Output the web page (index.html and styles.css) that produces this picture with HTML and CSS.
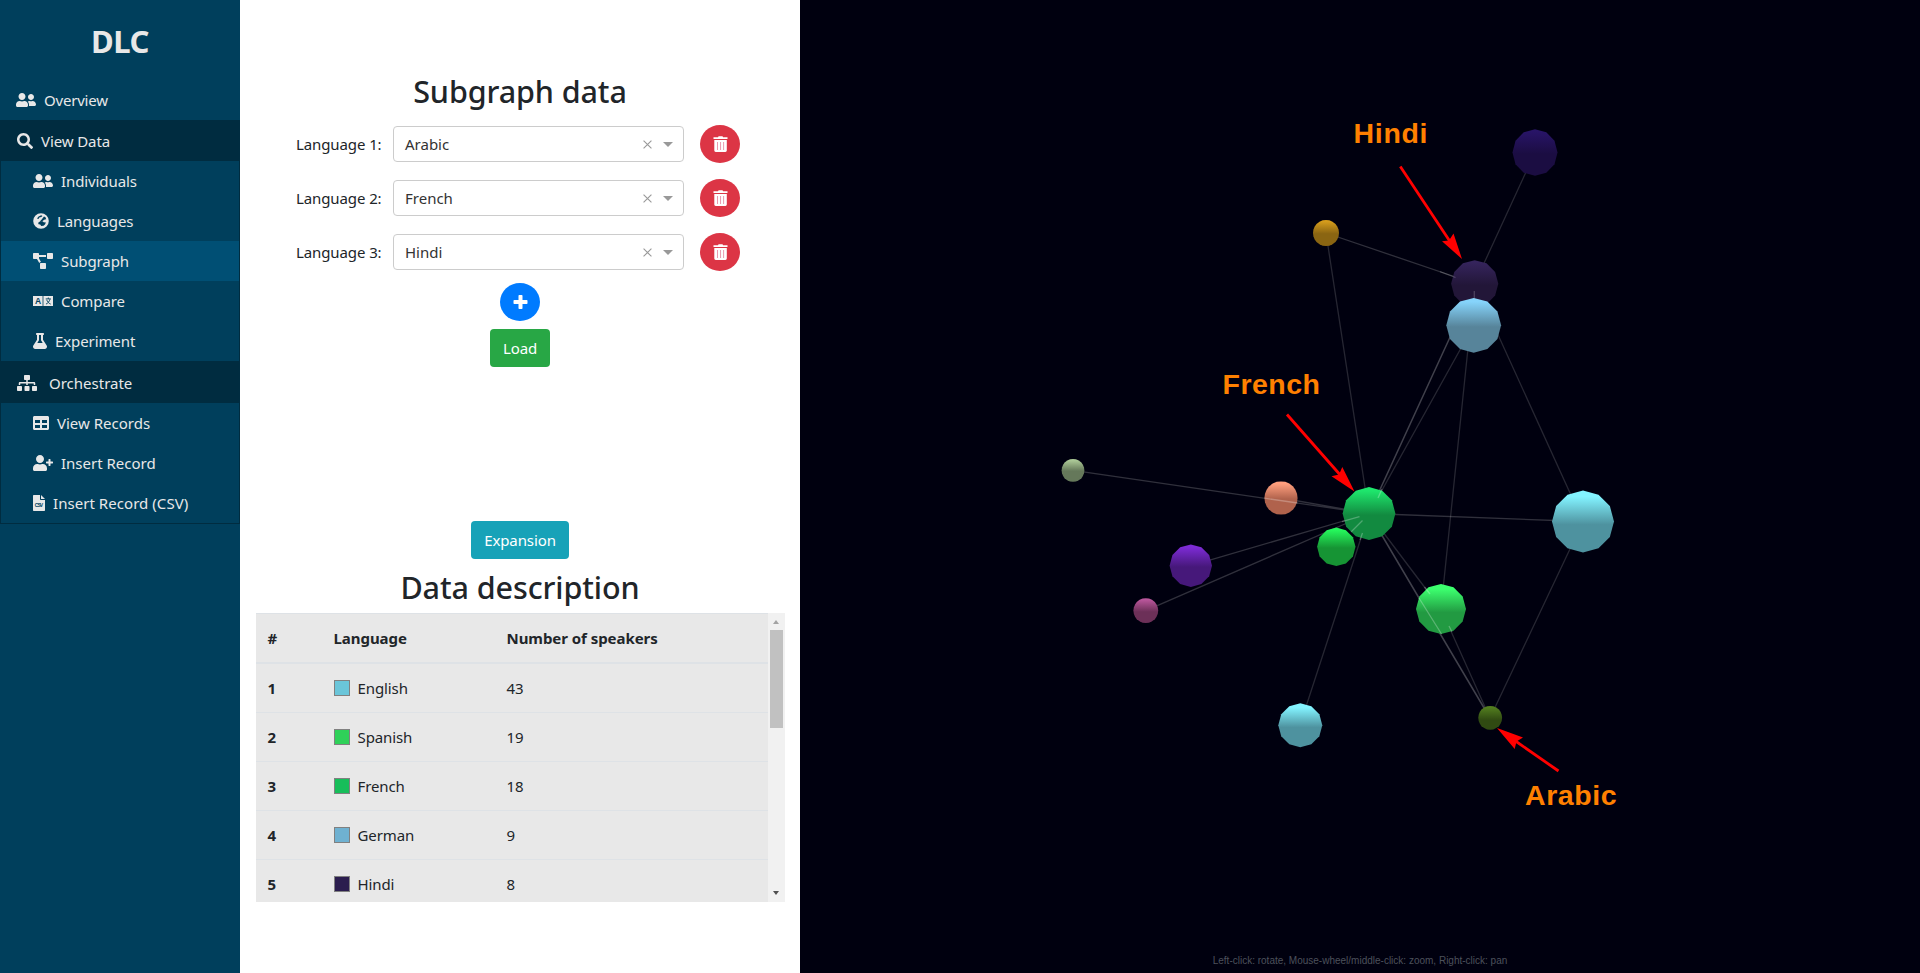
FILE: index.html
```html
<!DOCTYPE html>
<html lang="en">
<head>
<meta charset="utf-8">
<title>DLC - Subgraph</title>
<link rel="stylesheet" href="styles.css">
</head>
<body>
<svg class="defs" width="0" height="0" aria-hidden="true">
  <symbol id="i-users" viewBox="0 0 640 512"><path d="M192 256c61.9 0 112-50.1 112-112S253.9 32 192 32 80 82.1 80 144s50.1 112 112 112zm76.800 32h-8.300c-20.800 10-43.900 16-68.500 16s-47.600-6-68.500-16h-8.300C51.600 288 0 339.600 0 403.200V432c0 26.500 21.500 48 48 48h288c26.500 0 48-21.500 48-48v-28.800c0-63.600-51.600-115.200-115.200-115.200zM480 256c53 0 96-43 96-96s-43-96-96-96-96 43-96 96 43 96 96 96zm48 32h-3.800c-13.900 4.800-28.600 8-44.200 8s-30.300-3.200-44.200-8H432c-20.400 0-39.200 5.900-55.700 15.400 24.400 26.300 39.700 61.200 39.700 99.800v38.400c0 2.200-.5 4.300-.6 6.400H592c26.500 0 48-21.500 48-48 0-61.900-50.100-112-112-112z"/></symbol>
  <symbol id="i-search" viewBox="0 0 512 512"><path d="M505 442.700L405.300 343c-4.500-4.500-10.600-7-17-7H372c27.600-35.300 44-79.700 44-128C416 93.100 322.900 0 208 0S0 93.100 0 208s93.100 208 208 208c48.300 0 92.700-16.400 128-44v16.300c0 6.400 2.500 12.500 7 17l99.700 99.700c9.400 9.400 24.600 9.400 33.900 0l28.300-28.300c9.400-9.400 9.400-24.600.1-34zM208 336c-70.700 0-128-57.200-128-128 0-70.700 57.200-128 128-128 70.700 0 128 57.200 128 128 0 70.700-57.200 128-128 128z"/></symbol>
  <symbol id="i-globe" viewBox="0 0 16 16"><path fill-rule="evenodd" d="M8 .2a7.800 7.800 0 1 0 0 15.600A7.800 7.800 0 0 0 8 .2zM4 5.600 5.600 3.400 8.200 2.300 9.500 2.900 8.300 4.100 6.300 4.500 5.500 5.900zM9.800 4.900l1.200-1.500 1.500.9.700 2-1.400.3-2.400 1.300-2.200.2 1.500-1.700zM5.200 9.800l2.400-1.700 2 .2 1 1 2.300.3-.9 1.800-1.500 1.300-2.300.2-1-1.300-1.700-.3z"/></symbol>
  <symbol id="i-diagram" viewBox="0 0 640 512"><path d="M384 320H256c-17.670 0-32 14.330-32 32v128c0 17.670 14.330 32 32 32h128c17.670 0 32-14.330 32-32V352c0-17.670-14.330-32-32-32zM192 32c0-17.670-14.330-32-32-32H32C14.330 0 0 14.330 0 32v128c0 17.670 14.330 32 32 32h95.720l73.160 128.040C211.980 300.980 232.400 288 256 288h.28L192 175.510V128h224V64H192V32zM608 0H480c-17.670 0-32 14.330-32 32v128c0 17.670 14.330 32 32 32h128c17.670 0 32-14.330 32-32V32c0-17.670-14.330-32-32-32z"/></symbol>
  <symbol id="i-flask" viewBox="0 0 448 512"><path d="M437.200 403.500L320 215V64h8c13.300 0 24-10.700 24-24V24c0-13.300-10.700-24-24-24H120c-13.300 0-24 10.700-24 24v16c0 13.300 10.700 24 24 24h8v151L10.800 403.500C-18.500 450.600 15.300 512 70.900 512h306.200c55.700 0 89.400-61.500 60.100-108.500zM137.900 320l48.200-77.600c3.700-5.200 5.800-11.600 5.800-18.400V64h64v160c0 6.900 2.200 13.200 5.800 18.400l48.200 77.600h-172z"/></symbol>
  <symbol id="i-sitemap" viewBox="0 0 640 512"><path d="M128 352H32c-17.670 0-32 14.330-32 32v96c0 17.670 14.330 32 32 32h96c17.670 0 32-14.330 32-32v-96c0-17.670-14.330-32-32-32zm-24-80h192v48h48v-48h192v48h48v-57.590c0-21.170-17.230-38.410-38.410-38.410H344v-64h40c17.670 0 32-14.330 32-32V32c0-17.670-14.330-32-32-32H256c-17.670 0-32 14.330-32 32v96c0 17.670 14.330 32 32 32h40v64H94.410C73.230 224 56 241.230 56 262.410V320h48v-48zm264 80h-96c-17.670 0-32 14.330-32 32v96c0 17.670 14.330 32 32 32h96c17.670 0 32-14.330 32-32v-96c0-17.670-14.330-32-32-32zm240 0h-96c-17.670 0-32 14.330-32 32v96c0 17.670 14.330 32 32 32h96c17.670 0 32-14.330 32-32v-96c0-17.670-14.330-32-32-32z"/></symbol>
  <symbol id="i-table" viewBox="0 0 512 512"><path d="M464 32H48C21.490 32 0 53.490 0 80v352c0 26.510 21.490 48 48 48h416c26.510 0 48-21.490 48-48V80c0-26.510-21.490-48-48-48zM224 416H64v-96h160v96zm0-160H64v-96h160v96zm224 160H288v-96h160v96zm0-160H288v-96h160v96z"/></symbol>
  <symbol id="i-userplus" viewBox="0 0 640 512"><path d="M624 208h-64v-64c0-8.800-7.200-16-16-16h-32c-8.800 0-16 7.200-16 16v64h-64c-8.800 0-16 7.200-16 16v32c0 8.800 7.200 16 16 16h64v64c0 8.800 7.200 16 16 16h32c8.800 0 16-7.200 16-16v-64h64c8.800 0 16-7.200 16-16v-32c0-8.800-7.200-16-16-16zm-400 48c70.700 0 128-57.300 128-128S294.700 0 224 0 96 57.300 96 128s57.300 128 128 128zm89.600 32h-16.700c-22.200 10.200-46.900 16-72.900 16s-50.600-5.800-72.900-16h-16.700C60.200 288 0 348.200 0 422.400V464c0 26.500 21.500 48 48 48h352c26.500 0 48-21.500 48-48v-41.600c0-74.200-60.200-134.400-134.400-134.400z"/></symbol>
  <symbol id="i-plus" viewBox="0 0 15 16"><path d="M6.300 1h2.400q.8 0 .8.800V6h4.200q.8 0 .8.800v2.400q0 .8-.8.800H9.500v4.200q0 .8-.8.800H6.300q-.8 0-.8-.8V10H1.300q-.8 0-.8-.8V6.800q0-.8.8-.8h4.200V1.800q0-.8.800-.8z"/></symbol>
  <symbol id="i-trash" viewBox="0 0 15 16"><path d="M.5 1.200H5L5.600.200h3.900l.600 1h4.400v1.900H.500z"/><path d="M1.300 4.100h12.500v10.500q0 1.400-1.400 1.400H2.700q-1.400 0-1.400-1.400z"/><path class="slots" d="M4.500 6v8M7.550 6v8M10.600 6v8"/></symbol>
</svg>

<nav class="sidebar">
  <h1 class="brand">DLC</h1>
  <a class="item overview"><svg class="ic w20"><use href="#i-users"/></svg>Overview</a>
  <a class="item group"><svg class="ic w16"><use href="#i-search"/></svg>View Data</a>
  <div class="submenu">
    <a class="item"><svg class="ic w20"><use href="#i-users"/></svg>Individuals</a>
    <a class="item"><svg class="ic w16"><use href="#i-globe"/></svg>Languages</a>
    <a class="item active"><svg class="ic w20"><use href="#i-diagram"/></svg>Subgraph</a>
    <a class="item"><svg class="ic w20" viewBox="0 0 20 16"><path d="M0 3h9.600v10H0zM10.400 3H20v10h-9.600z"/><path class="ink" d="M12.700 5.900h5.200M15.300 4.500v1.400M17 6.200c-.6 2.200-2 3.900-4 4.900M13.700 6.800c.7 2 2 3.500 4 4.300"/><text class="glyph-a" x="2.100" y="11.200">A</text></svg>Compare</a>
    <a class="item"><svg class="ic w14"><use href="#i-flask"/></svg>Experiment</a>
  </div>
  <a class="item group orchestrate"><svg class="ic w20"><use href="#i-sitemap"/></svg>Orchestrate</a>
  <div class="submenu last">
    <a class="item"><svg class="ic w16"><use href="#i-table"/></svg>View Records</a>
    <a class="item"><svg class="ic w20"><use href="#i-userplus"/></svg>Insert Record</a>
    <a class="item csv"><svg class="ic w12" viewBox="0 0 12 16"><path d="M.7 0H7v4.300c0 .4.300.7.7.7H12v10.300c0 .4-.3.700-.7.700H.7c-.4 0-.7-.3-.7-.7V.7C0 .3.300 0 .7 0zM8 0l4 4H8z"/><text class="glyph-csv" x="1.800" y="11.600" textLength="8.400">CSV</text></svg>Insert Record (CSV)</a>
  </div>
</nav>

<main class="panel">
  <h2 class="title subgraph-title">Subgraph data</h2>
  <div class="pickers">
    <div class="picker"><label>Language 1:</label><div class="select"><span class="value">Arabic</span><svg class="clear" viewBox="0 0 8 8"><path d="M.5.5l7 7M7.500.5l-7 7"/></svg><i class="caret"></i></div><button class="round danger"><svg class="trash"><use href="#i-trash"/></svg></button></div>
    <div class="picker"><label>Language 2:</label><div class="select"><span class="value">French</span><svg class="clear" viewBox="0 0 8 8"><path d="M.5.5l7 7M7.500.5l-7 7"/></svg><i class="caret"></i></div><button class="round danger"><svg class="trash"><use href="#i-trash"/></svg></button></div>
    <div class="picker"><label>Language 3:</label><div class="select"><span class="value">Hindi</span><svg class="clear" viewBox="0 0 8 8"><path d="M.5.5l7 7M7.500.5l-7 7"/></svg><i class="caret"></i></div><button class="round danger"><svg class="trash"><use href="#i-trash"/></svg></button></div>
  </div>
  <button class="round add"><svg class="plus"><use href="#i-plus"/></svg></button>
  <button class="btn load">Load</button>
  <button class="btn expansion">Expansion</button>
  <h2 class="title description-title">Data description</h2>
  <div class="table-box">
    <div class="table">
      <div class="row head"><span>#</span><span>Language</span><span>Number of speakers</span></div>
      <div class="row"><b>1</b><span class="lang"><i class="swatch english"></i>English</span><span>43</span></div>
      <div class="row"><b>2</b><span class="lang"><i class="swatch spanish"></i>Spanish</span><span>19</span></div>
      <div class="row"><b>3</b><span class="lang"><i class="swatch french"></i>French</span><span>18</span></div>
      <div class="row"><b>4</b><span class="lang"><i class="swatch german"></i>German</span><span>9</span></div>
      <div class="row"><b>5</b><span class="lang"><i class="swatch hindi"></i>Hindi</span><span>8</span></div>
    </div>
    <div class="scrollbar"><i class="arrow up"></i><i class="thumb"></i><i class="arrow down"></i></div>
  </div>
</main>

<section class="graph">
<svg class="scene" viewBox="800 0 1120 973">
  <defs>
    <polygon id="ball" points="0,-1 .5,-.866 .866,-.5 1,0 .866,.5 .5,.866 0,1 -.5,.866 -.866,.5 -1,0 -.866,-.5 -.5,-.866"/>
    <polygon id="ball-fine" points="0,-1 .26,-.975 .5,-.866 .73,-.7 .866,-.5 .965,-.26 1,0 .965,.26 .866,.5 .73,.7 .5,.866 .26,.975 0,1 -.26,.975 -.5,.866 -.73,.7 -.866,.5 -.965,.26 -1,0 -.965,-.26 -.866,-.5 -.73,-.7 -.5,-.866 -.26,-.975"/>
    <linearGradient id="g1" x2="0" y2="1"><stop offset=".05" stop-color="#281467"/><stop offset=".53" stop-color="#1b0d42"/></linearGradient>
    <linearGradient id="g2" x2="0" y2="1"><stop offset=".05" stop-color="#d69d1c"/><stop offset=".53" stop-color="#8a6512"/></linearGradient>
    <linearGradient id="g3" x2="0" y2="1"><stop offset=".05" stop-color="#35245c"/><stop offset=".53" stop-color="#221638"/></linearGradient>
    <linearGradient id="g4" x2="0" y2="1"><stop offset=".07" stop-color="#86d4fb"/><stop offset=".53" stop-color="#57849a"/></linearGradient>
    <linearGradient id="g5" x2="0" y2="1"><stop offset=".07" stop-color="#1ee66c"/><stop offset=".53" stop-color="#128a40"/></linearGradient>
    <linearGradient id="g6" x2="0" y2="1"><stop offset=".07" stop-color="#25f75b"/><stop offset=".53" stop-color="#169434"/></linearGradient>
    <linearGradient id="g7" x2="0" y2="1"><stop offset=".07" stop-color="#ff9f7e"/><stop offset=".53" stop-color="#b0624c"/></linearGradient>
    <linearGradient id="g8" x2="0" y2="1"><stop offset=".1" stop-color="#83f3ff"/><stop offset=".55" stop-color="#4e929f"/></linearGradient>
    <linearGradient id="g9" x2="0" y2="1"><stop offset=".1" stop-color="#3cff6e"/><stop offset=".57" stop-color="#229a42"/></linearGradient>
    <linearGradient id="g10" x2="0" y2="1"><stop offset=".07" stop-color="#aac795"/><stop offset=".53" stop-color="#65785a"/></linearGradient>
    <linearGradient id="g11" x2="0" y2="1"><stop offset=".07" stop-color="#7c2bd4"/><stop offset=".53" stop-color="#46187a"/></linearGradient>
    <linearGradient id="g12" x2="0" y2="1"><stop offset=".07" stop-color="#b8559a"/><stop offset=".55" stop-color="#6c3058"/></linearGradient>
    <linearGradient id="g13" x2="0" y2="1"><stop offset=".07" stop-color="#527d1f"/><stop offset=".6" stop-color="#304a12"/></linearGradient>
  </defs>
  <path class="edge" d="M1535 152.500L1474.700 283.500M1326 233L1369 513.500M1473.700 325.300L1369 513.500M1474.700 283.500L1441 609M1474.700 283.500L1583 521.500M1583 521.500L1490 718M1369 513.500L1441 609M1441 609L1490 718M1369 513.500L1300 725"/>
  <path class="edge mid" d="M1326 233L1474.700 283.500M1369 513.500L1583 521.500M1369 513.500L1281 498M1369 513.500L1073 470.300M1369 513.500L1191 565.700M1369 513.500L1145.800 610.600"/>
  <path class="edge strong" d="M1474.700 283.500L1369 513.500M1369 513.500L1490 718"/>
  <g>
    <use href="#ball" fill="url(#g1)" transform="translate(1535 152.500) scale(22.500 23.300)"/>
    <use href="#ball-fine" fill="url(#g2)" transform="translate(1326 233) scale(13)"/>
    <use href="#ball" fill="url(#g3)" transform="translate(1474.700 283.800) scale(23.600)"/>
    <path class="edge mid" d="M1440 271.700L1455.500 277.500M1474.300 291v8"/>
    <use href="#ball" fill="url(#g4)" transform="translate(1473.700 325.300) scale(27.400)"/>
    <use href="#ball" fill="url(#g5)" transform="translate(1369 513.500) scale(26.400)"/>
    <path class="edge over" d="M1382 489L1378 498M1342 521.500L1359.500 516.500M1351 532L1362.500 520.500M1362.500 533L1360 540"/>
    <use href="#ball" fill="url(#g6)" transform="translate(1336.300 546.800) scale(19.200)"/>
    <use href="#ball-fine" fill="url(#g7)" transform="translate(1281 498) scale(16.600)"/>
    <path class="edge over" d="M1264.500 498.200L1297.500 503"/>
    <use href="#ball" fill="url(#g8)" transform="translate(1583 521.500) scale(31)"/>
    <use href="#ball" fill="url(#g9)" transform="translate(1441 609) scale(25)"/>
    <path class="edge over" d="M1419 598L1441.500 634M1424.500 587L1430 594M1449 626l3 6"/>
    <use href="#ball-fine" fill="url(#g10)" transform="translate(1073 470.400) scale(11.400)"/>
    <use href="#ball" fill="url(#g11)" transform="translate(1190.800 565.700) scale(21.200)"/>
    <use href="#ball-fine" fill="url(#g12)" transform="translate(1145.800 610.600) scale(12.400)"/>
    <use href="#ball-fine" fill="url(#g13)" transform="translate(1490.200 717.800) scale(11.900)"/>
    <use href="#ball" fill="url(#g8)" transform="translate(1300.300 725.200) scale(22)"/>
  </g>
  <g class="pointer">
    <path d="M1400.300 166.500L1451 243M1287 414.500L1342 477M1558.500 771L1514 740"/>
    <polygon points="1462,259 1442,241.300 1449,240.500 1453.500,233.500"/>
    <polygon points="1354.500,491.500 1331.500,476.300 1339,474.500 1342.300,467"/>
    <polygon points="1497,728 1523,737.500 1516.500,741.500 1514.700,749"/>
  </g>
  <g class="tag">
    <text x="1353.500" y="143" textLength="74">Hindi</text>
    <text x="1222.500" y="394" textLength="97.500">French</text>
    <text x="1525" y="805" textLength="91.500">Arabic</text>
  </g>
</svg>
<p class="hint">Left-click: rotate, Mouse-wheel/middle-click: zoom, Right-click: pan</p>
</section>
</body>
</html>
```
FILE: styles.css
```css
* { box-sizing: border-box; }
body {
  margin: 0;
  height: 973px;
  display: grid;
  grid-template-columns: 240px 560px 1120px;
  overflow: hidden;
  background: #fff;
  color: #212529;
  font: 15px/24px "Noto Sans", "Open Sans", sans-serif;
  letter-spacing: -0.1px;
}
.defs { position: absolute; }
h1, h2, p { margin: 0; }
button { border: 0; padding: 0; font: inherit; letter-spacing: inherit; color: #fff; }

/* Sidebar */
.sidebar { background: #003f5c; color: #e8e8e8; }
.brand { height: 80px; padding-top: 17px; font-size: 31px; line-height: 48px; text-align: center; font-weight: 700; letter-spacing: -0.4px; }
.item { display: flex; align-items: center; height: 40px; padding-left: 32px; }
.ic { height: 16px; margin-right: 8px; fill: currentColor; flex: none; }
.w20 { width: 20px; }
.w16 { width: 16px; }
.w14 { width: 14px; }
.w12 { width: 12px; }
.overview { padding-left: 16px; letter-spacing: -0.2px; }
.group { height: 41px; padding-left: 17px; background: #002c40; }
.orchestrate { height: 42px; padding-top: 2px; letter-spacing: 0; }
.orchestrate .ic { margin-right: 12px; }
.submenu { border: solid #002c40; border-width: 0 1px; }
.last { border-bottom-width: 1px; letter-spacing: 0; }
.csv { letter-spacing: .05px; }
.active { background: #004f74; }
.ink { fill: none; stroke: #003f5c; stroke-width: .9; }
.glyph-a { font: 700 8.500px "Liberation Sans", sans-serif; fill: #003f5c; }
.glyph-csv { font: 700 5px "Liberation Sans", sans-serif; fill: #003f5c; letter-spacing: 0; }

/* Controls */
.panel { display: flex; flex-direction: column; align-items: center; }
.title { font-size: 30.500px; font-weight: 500; line-height: 38px; }
.subgraph-title { margin-top: 72px; letter-spacing: -0.1px; }
.pickers { display: grid; gap: 16px; margin-top: 15px; width: 448px; }
.picker { display: grid; grid-template-columns: 97px 291px 40px; align-items: center; height: 38px; }
.picker .round { margin-left: 16px; }
.select { display: flex; align-items: center; height: 36px; padding: 0 10px 0 11px; border: 1px solid #ccc; border-radius: 4px; color: #333; }
.value { flex: 1; letter-spacing: 0; }
.clear { width: 9px; height: 9px; margin-right: 11px; fill: none; stroke: #999; stroke-width: 1; }
.caret { border: 5px solid transparent; border-top-color: #999; border-bottom: 0; }
.round { display: grid; place-items: center; width: 40px; height: 38px; border-radius: 50%; }
.danger { background: #dc3545; }
.add { margin-top: 12px; background: #007bff; flex: none; }
.trash { width: 15px; height: 16px; fill: #fff; }
.slots { fill: none; stroke: #e88fa6; stroke-width: .9; }
.plus { width: 15px; height: 16px; fill: #fff; }
.btn { height: 38px; border-radius: 4px; flex: none; }
.load { width: 60px; margin-top: 8px; background: #28a745; }
.expansion { width: 98px; margin-top: 154px; background: #17a2b8; }
.description-title { margin-top: 9px; }

/* Data table */
.table-box { display: flex; width: 529px; height: 289px; margin-top: 7px; overflow: hidden; }
.table { flex: 1; background: #e8e8e8; }
.row { display: grid; grid-template-columns: 66px 173px 1fr; align-items: center; height: 49px; padding: 0 12px; border-bottom: 1px solid #dee2e6; }
.head { height: 51px; border-top: 1px solid #dee2e6; border-bottom-width: 2px; font-weight: 700; letter-spacing: -0.05px; }
.lang { display: flex; align-items: center; gap: 8px; }
.swatch { width: 16px; height: 16px; border: 1px solid gray; }
.english { background: #6ac5d9; }
.spanish { background: #2fd159; }
.french { background: #17be5a; }
.german { background: #6fb1d1; }
.hindi { background: #2b1d4e; }
.scrollbar { display: flex; flex-direction: column; align-items: center; width: 17px; background: #f1f1f1; }
.thumb { width: 13px; height: 98px; margin-top: 6px; background: #c1c1c1; }
.arrow { border: 3.500px solid transparent; }
.up { margin-top: 7px; border-top: 0; border-bottom: 4px solid #a3a3a3; }
.down { margin: auto 0 7px; border-bottom: 0; border-top: 4px solid #505050; }

/* Graph */
.graph { position: relative; background: #00000f; }
.scene { display: block; width: 1120px; height: 973px; }
.edge { fill: none; stroke: #fff; stroke-opacity: .15; stroke-width: 1.300; }
.mid { stroke-opacity: .19; }
.strong { stroke-opacity: .25; stroke-width: 1.500; }
.over { stroke-opacity: .26; }
.pointer { fill: red; }
.pointer path { stroke: red; stroke-width: 2.800; }
.tag { font: 700 28.500px "Liberation Sans", Arial, sans-serif; fill: #ff8000; letter-spacing: 0; }
.hint { position: absolute; bottom: 4px; left: 0; width: 100%; text-align: center; font: 10px/16px "Liberation Sans", Arial, sans-serif; letter-spacing: 0; color: #4c515b; }
```
